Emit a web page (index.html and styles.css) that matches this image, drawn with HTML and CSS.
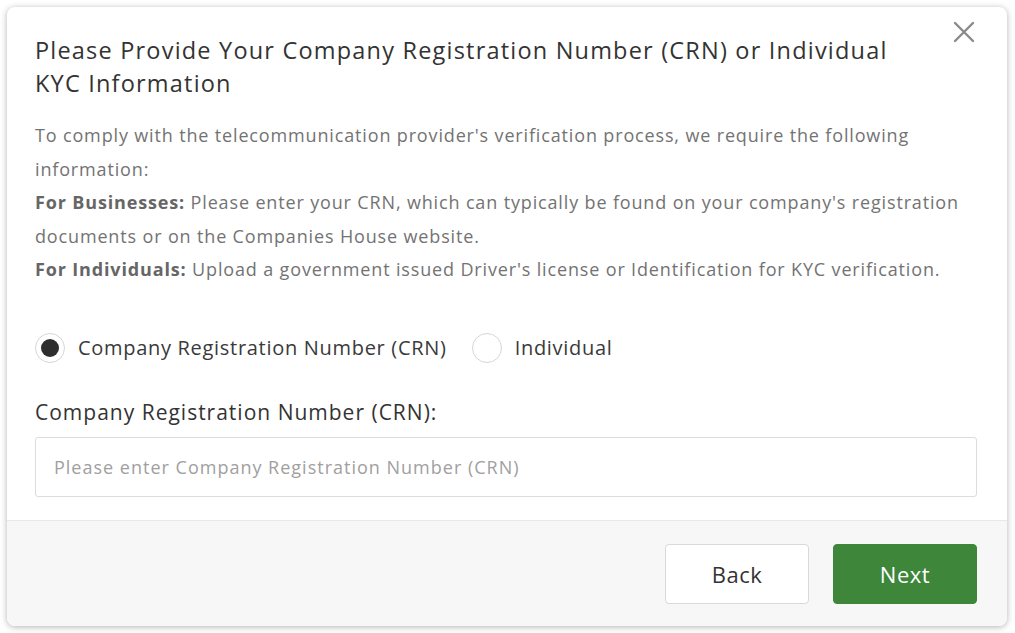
FILE: index.html
```html
<!DOCTYPE html>
<html lang="en">
<head>
    <meta charset="UTF-8">
    <title>CRN / KYC</title>
    <link rel="stylesheet" href="styles.css">
</head>
<body>
    <div class="modal">
        <div class="modal-body">
            <button class="close-btn" type="button" aria-label="Close">
                <svg width="22" height="22" viewBox="0 0 22 22">
                    <path d="M2 2 L20 20 M20 2 L2 20" stroke="#8a8a8a" stroke-width="2.4" stroke-linecap="round"/>
                </svg>
            </button>
            <h2 class="modal-title">Please Provide Your Company Registration Number (CRN) or Individual KYC Information</h2>
            <div class="info">
                <p>To comply with the telecommunication provider's verification process, we require the following information:</p>
                <p><b>For Businesses:</b> Please enter your CRN, which can typically be found on your company's registration documents or on the Companies House website.</p>
                <p><b>For Individuals:</b> Upload a government issued Driver's license or Identification for KYC verification.</p>
            </div>

            <!-- 선택 -->
            <div class="radio-row">
                <label class="radio-opt">
                    <span class="radio checked"></span>
                    Company Registration Number (CRN)
                </label>
                <label class="radio-opt">
                    <span class="radio"></span>
                    Individual
                </label>
            </div>

            <label class="field-label" for="crn">Company Registration Number (CRN):</label>
            <input class="field-input" type="text" id="crn" placeholder="Please enter Company Registration Number (CRN)">
        </div>
        <div class="modal-footer">
            <button class="btn btn-back" type="button">Back</button>
            <button class="btn btn-next" type="button">Next</button>
        </div>
    </div>
</body>
</html>
```

FILE: styles.css
```css
body {
    font-family: "Open Sans", "Liberation Sans", sans-serif;
    background-color: #fff;
    color: #333;
    margin: 0;
    padding: 7px;
}
.modal {
    width: 1000px;
    background-color: #fff;
    border-radius: 8px;
    box-shadow: 0 1px 6px rgba(0, 0, 0, 0.3);
    overflow: hidden;
}
.modal-body {
    position: relative;
    padding: 27px 30px 23px 28px;
}
.close-btn {
    position: absolute;
    top: 14px;
    right: 32px;
    border: none;
    background: none;
    padding: 0;
    cursor: pointer;
}
.modal-title {
    font-size: 23.5px;
    font-weight: 400;
    line-height: 33px;
    letter-spacing: 1.2px;
    color: #333;
    margin: 0 60px 19px 0;
}
.info {
    font-size: 18px;
    line-height: 33.5px;
    letter-spacing: 0.85px;
    color: #737373;
}
.info p {
    margin: 0;
}
.info b {
    color: #666;
    font-weight: 700;
}
.radio-row {
    display: flex;
    align-items: center;
    gap: 25px;
    margin-top: 46px;
}
.radio-opt {
    display: flex;
    align-items: center;
    gap: 13px;
    font-size: 20px;
    letter-spacing: 0.7px;
    color: #3a3a3a;
}
.radio {
    width: 30px;
    height: 30px;
    border: 1px solid #d6d6d6;
    border-radius: 50%;
    box-sizing: border-box;
    position: relative;
    background: #fff;
}
.radio.checked::after {
    content: "";
    position: absolute;
    left: 5px;
    top: 5px;
    width: 18px;
    height: 18px;
    border-radius: 50%;
    background: #2e2e2e;
}
.field-label {
    display: block;
    font-size: 21px;
    line-height: 28px;
    letter-spacing: 1px;
    color: #333;
    margin-top: 35px;
}
.field-input {
    display: block;
    width: 100%;
    box-sizing: border-box;
    height: 60px;
    margin-top: 11px;
    padding: 0 18px;
    border: 1px solid #dcdcdc;
    border-radius: 3px;
    font-family: inherit;
    font-size: 18px;
    letter-spacing: 1px;
    color: #333;
}
.field-input::placeholder {
    color: #a0a0a0;
}
.modal-footer {
    display: flex;
    justify-content: flex-end;
    gap: 24px;
    padding: 23px 30px 22px;
    background-color: #f7f7f7;
    border-top: 1px solid #e8e8e8;
}
.btn {
    width: 144px;
    height: 60px;
    border-radius: 4px;
    font-family: inherit;
    font-size: 22px;
    letter-spacing: 0.5px;
    cursor: pointer;
}
.btn-back {
    background-color: #fff;
    border: 1px solid #d9d9d9;
    color: #333;
}
.btn-next {
    background-color: #3d863a;
    border: 1px solid #3d863a;
    color: #fff;
}
```
